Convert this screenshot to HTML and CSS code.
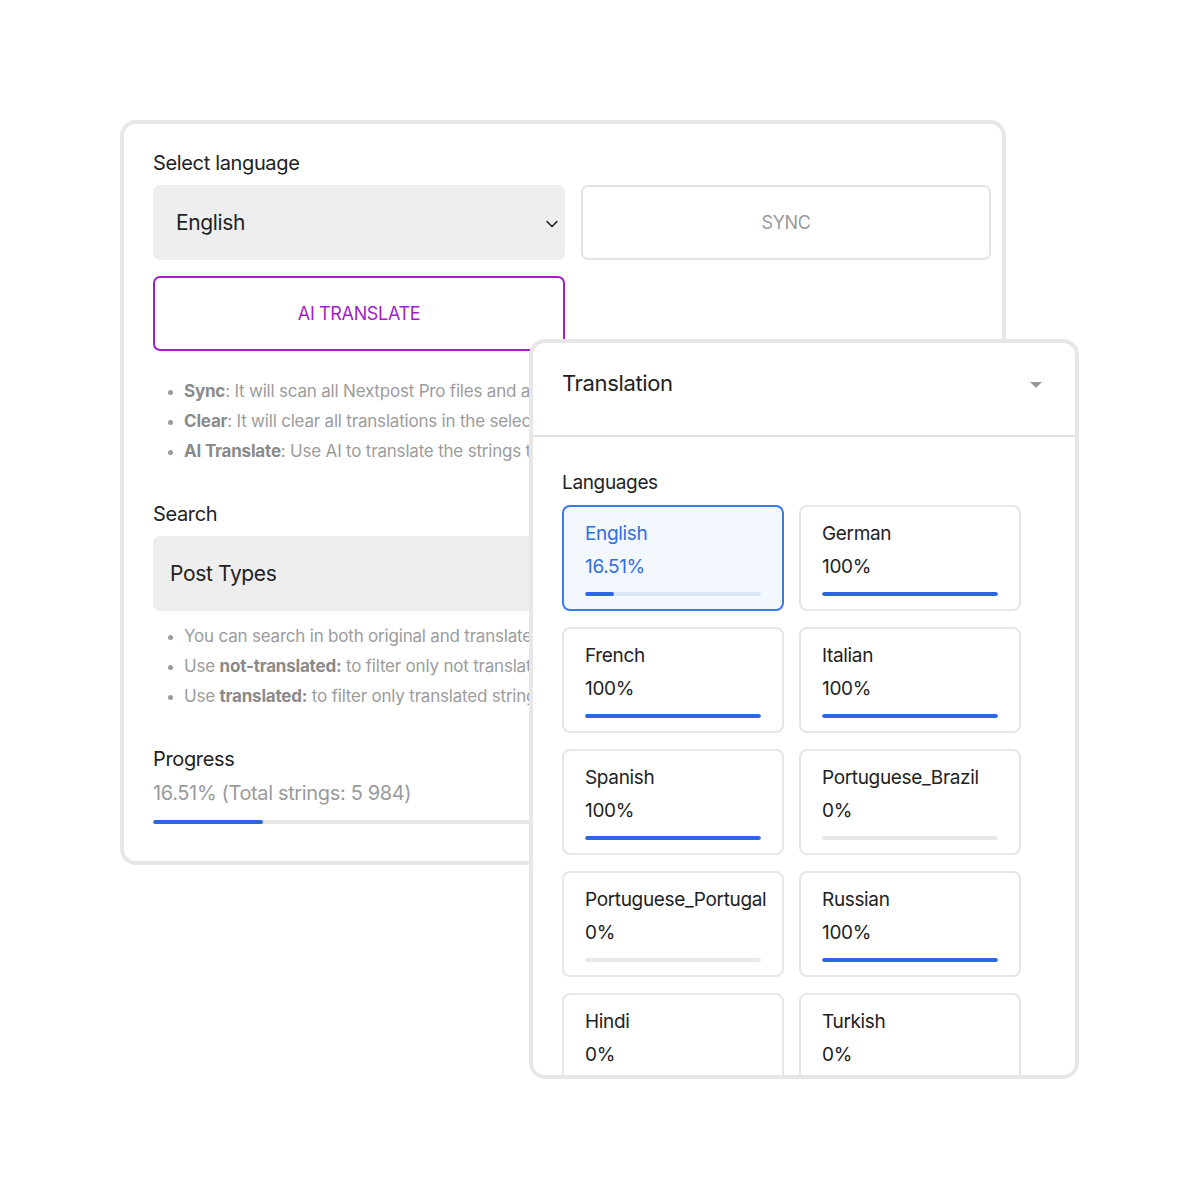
FILE: index.html
```html
<!doctype html>
<html lang="en">
<head>
	<meta charset="UTF-8">
	<title>Translation</title>
	<link rel="stylesheet" href="styles.css">
</head>
<body>
	<div class="stage">
		<div class="panel">
			<div class="field-label">Select language</div>
			<div class="actions">
				<div class="select">
					<span>English</span>
					<svg class="chevron" width="14" height="14" viewBox="0 0 14 14"><path d="M2 4.5l5 5 5-5" fill="none" stroke="#222" stroke-width="1.6" stroke-linecap="round" stroke-linejoin="round"/></svg>
				</div>
				<a href="javascript:;" class="btn btn-sync">SYNC</a>
				<a href="javascript:;" class="btn btn-ai">AI TRANSLATE</a>
			</div>
			<ul class="notes notes-top">
				<li><b>Sync</b>: It will scan all Nextpost Pro files and add new strings to the list</li>
				<li><b>Clear</b>: It will clear all translations in the selected language</li>
				<li><b>AI Translate</b>: Use AI to translate the strings that are not translated</li>
			</ul>

			<div class="field-label field-gap">Search</div>
			<div class="search">Post Types</div>
			<ul class="notes notes-search">
				<li>You can search in both original and translated strings</li>
				<li>Use <b>not-translated:</b> to filter only not translated strings</li>
				<li>Use <b>translated:</b> to filter only translated strings</li>
			</ul>

			<div class="field-label field-gap">Progress</div>
			<div class="progress-text">16.51% (Total strings: 5 984)</div>
			<div class="track track-main"><div class="fill" style="width: 16.51%"></div></div>
		</div>

		<div class="popup">
			<div class="popup-head">
				<span>Translation</span>
				<i class="caret"></i>
			</div>
			<div class="popup-body">
				<div class="field-label">Languages</div>
				<div class="lang-grid">
					<div class="lang active">
						<div class="lang-name">English</div>
						<div class="lang-pct">16.51%</div>
						<div class="track"><div class="fill" style="width: 16.51%"></div></div>
					</div>
					<div class="lang">
						<div class="lang-name">German</div>
						<div class="lang-pct">100%</div>
						<div class="track"><div class="fill" style="width: 100%"></div></div>
					</div>
					<div class="lang">
						<div class="lang-name">French</div>
						<div class="lang-pct">100%</div>
						<div class="track"><div class="fill" style="width: 100%"></div></div>
					</div>
					<div class="lang">
						<div class="lang-name">Italian</div>
						<div class="lang-pct">100%</div>
						<div class="track"><div class="fill" style="width: 100%"></div></div>
					</div>
					<div class="lang">
						<div class="lang-name">Spanish</div>
						<div class="lang-pct">100%</div>
						<div class="track"><div class="fill" style="width: 100%"></div></div>
					</div>
					<div class="lang">
						<div class="lang-name">Portuguese_Brazil</div>
						<div class="lang-pct">0%</div>
						<div class="track"><div class="fill" style="width: 0%"></div></div>
					</div>
					<div class="lang">
						<div class="lang-name">Portuguese_Portugal</div>
						<div class="lang-pct">0%</div>
						<div class="track"><div class="fill" style="width: 0%"></div></div>
					</div>
					<div class="lang">
						<div class="lang-name">Russian</div>
						<div class="lang-pct">100%</div>
						<div class="track"><div class="fill" style="width: 100%"></div></div>
					</div>
					<div class="lang">
						<div class="lang-name">Hindi</div>
						<div class="lang-pct">0%</div>
						<div class="track"><div class="fill" style="width: 0%"></div></div>
					</div>
					<div class="lang">
						<div class="lang-name">Turkish</div>
						<div class="lang-pct">0%</div>
						<div class="track"><div class="fill" style="width: 0%"></div></div>
					</div>
				</div>
			</div>
		</div>
	</div>
</body>
</html>
```

FILE: styles.css
```css
body {
	margin: 0;
	padding: 0;
	background: #fff;
	color: #222;
	font: 20px/24px Inter, "Liberation Sans", sans-serif;
	letter-spacing: -0.35px;
}
ul {
	margin: 0;
	padding: 0;
}
.stage {
	position: relative;
	width: 1200px;
	height: 1200px;
}
/* 后面的设置面板 */
.panel {
	box-sizing: border-box;
	width: 886px;
	height: 745px;
	position: relative;
	top: 120px;
	left: 120px;
	padding: 27px 0 0 29px;
	border: 4px solid #e7e7e7;
	border-radius: 16px;
	background: #fff;
	overflow: hidden;
}
.field-label {
	font-size: 20px;
	line-height: 24px;
	margin-bottom: 10px;
	color: #222;
}
.field-gap {
	margin-top: 36px;
}
.actions {
	display: grid;
	grid-template-columns: 412px 410px;
	grid-auto-rows: 75px;
	gap: 16px;
}
.select {
	display: flex;
	align-items: center;
	justify-content: space-between;
	padding: 0 6px 0 23px;
	background: #eee;
	border-radius: 7px;
	font-size: 21px;
}
.chevron {
	margin-top: 2px;
}
.btn {
	display: flex;
	align-items: center;
	justify-content: center;
	box-sizing: border-box;
	border-radius: 7px;
	font-size: 18px;
	text-decoration: none;
}
.btn-sync {
	border: 2px solid #e4e4e4;
	color: #9a9a9a;
}
.btn-ai {
	border: 2px solid #a21fc3;
	color: #a21fc3;
}
/* 说明文字只露出到浮层边缘 */
.notes {
	width: 376px;
	box-sizing: border-box;
	overflow: hidden;
	list-style: disc;
	padding-left: 31px;
	color: #9c9c9c;
	font-size: 17px;
	line-height: 30px;
	letter-spacing: -0.2px;
	white-space: nowrap;
}
.notes li::marker {
	color: #9c9c9c;
	font-size: 14px;
}
.notes b {
	color: #8a8a8a;
	font-weight: 700;
}
.notes-top {
	margin-top: 25px;
}
.notes-search {
	margin-top: 10px;
}
.search {
	width: 838px;
	height: 75px;
	box-sizing: border-box;
	padding-left: 17px;
	display: flex;
	align-items: center;
	background: #eee;
	border-radius: 7px;
	font-size: 21px;
}
.progress-text {
	margin-top: 5px;
	color: #9a9a9a;
	font-size: 20px;
}
.track {
	height: 4px;
	border-radius: 2px;
	background: #e8e8e8;
	overflow: hidden;
}
.track-main {
	width: 666px;
	margin-top: 15px;
}
.fill {
	height: 100%;
	border-radius: 2px;
	background: #2b66e4;
}
/* 浮在上面的翻译面板 */
.popup {
	position: absolute;
	left: 529px;
	top: 339px;
	width: 550px;
	height: 740px;
	box-sizing: border-box;
	border: 4px solid #e7e7e7;
	border-radius: 16px;
	background: #fff;
	overflow: hidden;
}
.popup-head {
	display: flex;
	justify-content: space-between;
	height: 94px;
	box-sizing: border-box;
	padding: 26px 33px 0 29px;
	border-bottom: 2px solid #e0e0e0;
	font-size: 22px;
	line-height: 28px;
}
.caret {
	width: 0;
	height: 0;
	margin-top: 13px;
	border-left: 6px solid transparent;
	border-right: 6px solid transparent;
	border-top: 6px solid #999;
}
.popup-body {
	padding: 34px 0 0 29px;
}
.popup-body .field-label {
	font-size: 19px;
}
.lang-grid {
	display: grid;
	grid-template-columns: 222px 222px;
	grid-auto-rows: 106px;
	column-gap: 15px;
	row-gap: 16px;
}
.lang {
	box-sizing: border-box;
	padding: 15px 21px 0;
	border: 2px solid #e6e6e6;
	border-radius: 8px;
	font-size: 19px;
	line-height: 24px;
	white-space: nowrap;
}
.lang-pct {
	margin-top: 9px;
}
.lang .track {
	margin-top: 13px;
}
.lang.active {
	border-color: #3a7be8;
	background: #f3f7fe;
	color: #2f6fe3;
}
.lang.active .track {
	background: #dbe6f9;
}
```
